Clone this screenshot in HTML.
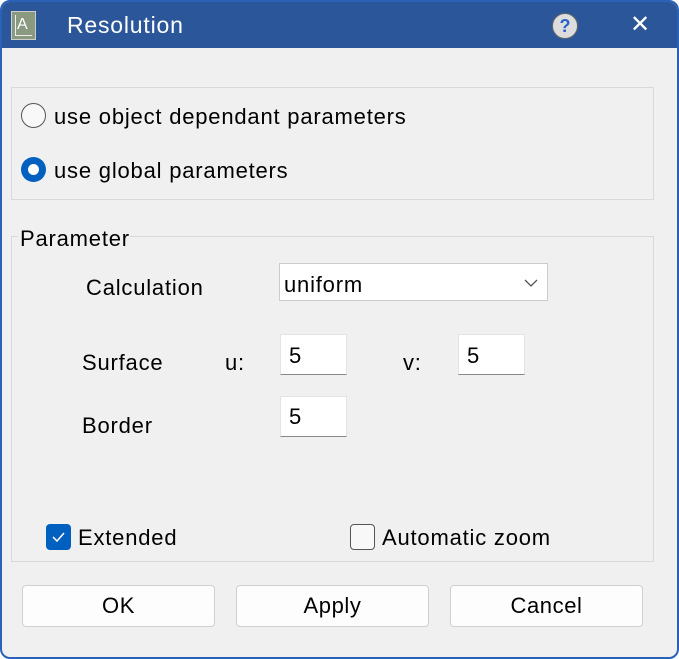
<!DOCTYPE html>
<html><head><style>
*{box-sizing:border-box;margin:0;padding:0}
body{width:679px;height:659px;background:#fff;font-family:"Liberation Sans",sans-serif;color:#000;position:relative;overflow:hidden}
.win{position:absolute;left:0;top:0;width:679px;height:659px;border:2px solid #2b62b8;border-radius:10px;background:#f0f0f0;overflow:hidden}
.tb{position:absolute;left:0;top:0;width:100%;height:46px;background:#2b579a}
.a{position:absolute;font-size:22px;white-space:nowrap;line-height:1;letter-spacing:0.8px}
.grp{position:absolute;border:1px solid #d9d9d9}
.box{position:absolute;background:#fff;border:1px solid #e3e3e3;border-bottom:1px solid #888}
.btn{position:absolute;background:#fdfdfd;border:1px solid #d0d0d0;border-radius:4px;font-size:22px;text-align:center;line-height:40px;width:193px;height:42px;top:583px;letter-spacing:0.6px}
</style></head><body>
<div class="win">
<div class="tb">
 <div style="position:absolute;left:9px;top:9px;width:25px;height:29px;background:#8a9a80;border:1px solid #ccc"></div>
 <div style="position:absolute;left:13px;top:13px;width:17px;height:21px;border:1px solid #eee;border-top:none;border-right:none"></div>
 <div class="a" style="left:15px;top:15px;font-size:16px;color:#fff;letter-spacing:0">A</div>
 <div class="a" style="left:65px;top:12px;color:#fff;font-size:23px">Resolution</div>
 <div style="position:absolute;left:550px;top:11px;width:26px;height:26px;border-radius:50%;background:#ddd;border:1px solid #666;color:#2b62c8;font-weight:bold;font-size:18px;text-align:center;line-height:24px">?</div>
 <div class="a" style="left:628px;top:11px;color:#fff;font-size:24px">✕</div>
</div>
<div class="grp" style="left:9px;top:85px;width:643px;height:113px"></div>
<div style="position:absolute;left:19px;top:101px;width:25px;height:25px;border:1.5px solid #555;border-radius:50%;background:#f8f8f8"></div>
<div class="a" style="left:52px;top:104px">use object dependant parameters</div>
<div style="position:absolute;left:19px;top:155px;width:25px;height:25px;border-radius:50%;background:#0060c0"></div>
<div style="position:absolute;left:26px;top:162px;width:11px;height:11px;border-radius:50%;background:#fff"></div>
<div class="a" style="left:52px;top:158px">use global parameters</div>
<div class="grp" style="left:9px;top:234px;width:643px;height:326px"></div>
<div style="position:absolute;left:16px;top:226px;width:112px;height:20px;background:#f0f0f0"></div>
<div class="a" style="left:18px;top:226px">Parameter</div>
<div class="a" style="left:84px;top:275px">Calculation</div>
<div class="box" style="left:277px;top:261px;width:269px;height:38px;border:1px solid #ccc"></div>
<div class="a" style="left:282px;top:272px">uniform</div>
<svg style="position:absolute;left:522px;top:276px" width="14" height="10"><path d="M1 2 L7 8 L13 2" fill="none" stroke="#555" stroke-width="1.3"/></svg>
<div class="a" style="left:80px;top:350px">Surface</div>
<div class="a" style="left:223px;top:350px">u:</div>
<div class="box" style="left:278px;top:332px;width:67px;height:41px"></div>
<div class="a" style="left:287px;top:343px">5</div>
<div class="a" style="left:401px;top:350px">v:</div>
<div class="box" style="left:456px;top:332px;width:67px;height:41px"></div>
<div class="a" style="left:465px;top:343px">5</div>
<div class="a" style="left:80px;top:413px">Border</div>
<div class="box" style="left:278px;top:394px;width:67px;height:41px"></div>
<div class="a" style="left:287px;top:404px">5</div>
<div style="position:absolute;left:44px;top:522px;width:25px;height:26px;border-radius:4px;background:#0060c0"></div>
<svg style="position:absolute;left:44px;top:522px" width="25" height="26"><path d="M7 13 L11 17 L18 9" fill="none" stroke="#fff" stroke-width="1.5"/></svg>
<div class="a" style="left:76px;top:525px">Extended</div>
<div style="position:absolute;left:348px;top:522px;width:25px;height:26px;border-radius:4px;border:1.5px solid #555;background:#f8f8f8"></div>
<div class="a" style="left:380px;top:525px">Automatic zoom</div>
<div class="btn" style="left:20px">OK</div>
<div class="btn" style="left:234px">Apply</div>
<div class="btn" style="left:448px">Cancel</div>
</div>
</body></html>
